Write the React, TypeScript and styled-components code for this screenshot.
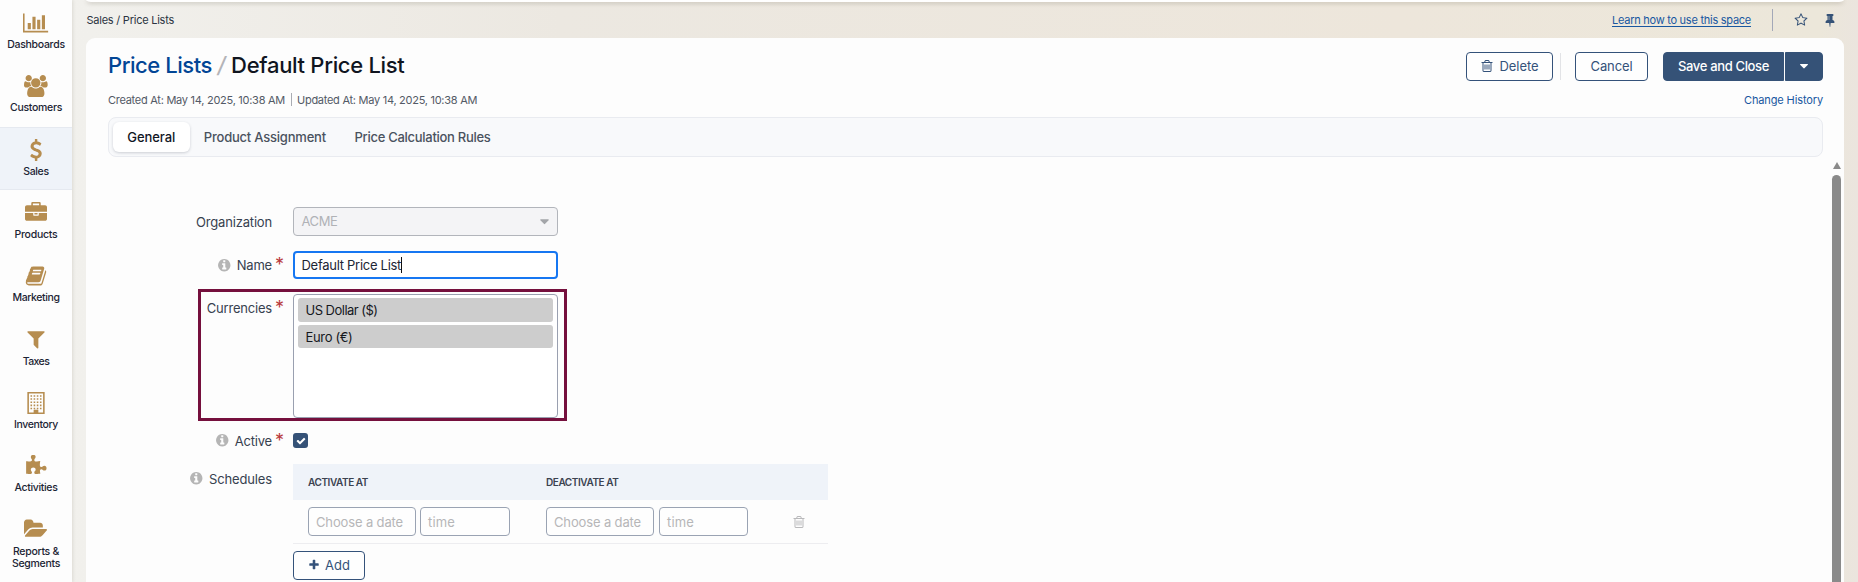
import React from 'react';
import styled, { createGlobalStyle, css } from 'styled-components';

const GlobalStyle = createGlobalStyle`
  *, *::before, *::after { box-sizing: border-box; }
  html, body { margin: 0; height: 100%; overflow: hidden; }
  body {
    font-family: Inter, "Liberation Sans", sans-serif;
    font-size: 13px;
    color: #2e3848;
    background: #f1f0ec;
  }
  a { color: #1857a0; text-decoration: none; }
`;

/* ---------- icons (1792 unit grid) ---------- */

const PATHS = {
  chart: 'M640 896v512h-256v-512h256zm384-512v1024h-256v-1024h256zm1024 1152v128h-2048v-1536h128v1408h1920zm-640-896v768h-256v-768h256zm384-384v1152h-256v-1152h256z',
  users: 'M593 896q-162 5-265 128h-134q-82 0-138-40.5t-56-118.5q0-353 124-353 6 0 43.5 21t97.5 42.5 119 21.5q67 0 133-23-5 37-5 66 0 159 93 256zm1071 637q0 120-73 189.5t-194 69.5h-874q-121 0-194-69.5t-73-189.5q0-53 3.5-103.5t14-109 26.5-108.5 43-97.5 62-81 85.5-53.5 111.5-20q10 0 43 21.5t73 48 107 48 135 21.5 135-21.5 107-48 73-48 43-21.5q61 0 111.5 20t85.5 53.5 62 81 43 97.5 26.5 108.5 14 109 3.5 103.5zm-1024-1277q0 106-75 181t-181 75-181-75-75-181 75-181 181-75 181 75 75 181zm704 384q0 159-112.5 271.5t-271.5 112.5-271.5-112.5-112.5-271.5 112.5-271.5 271.5-112.5 271.5 112.5 112.5 271.5zm576 225q0 78-56 118.5t-138 40.5h-134q-103-123-265-128 93-97 93-256 0-29-5-66 66 23 133 23 59 0 119-21.5t97.5-42.5 43.5-21q124 0 124 353zm-128-609q0 106-75 181t-181 75-181-75-75-181 75-181 181-75 181 75 75 181z',
  dollar: 'M1362 1185q0 153-99.5 263.5t-258.5 136.5v175q0 14-9 23t-23 9h-135q-13 0-22.5-9.5t-9.5-22.5v-175q-66-9-127.5-31t-101.5-44.5-74-48-46.5-37.5-17.5-18q-17-21-2-41l103-135q7-10 23-12 15-2 24 9l2 2q113 99 243 125 37 8 74 8 81 0 142.5-43t61.5-122q0-28-15-53t-33.5-42-58.5-37.5-66-32-80-32.5q-39-16-61.5-25t-61.5-26.5-62.5-31-56.5-35.5-53.5-42.5-43.5-49-35.5-58-21-66.5-8.5-78q0-138 98-242t255-134v-180q0-13 9.5-22.5t22.5-9.5h135q14 0 23 9t9 23v176q57 6 110.5 23t87 33.5 63.5 37.5 39 29 15 14q17 18 5 38l-81 146q-8 15-23 16-14 3-27-7-3-3-14.5-12t-39-26.5-58.5-32-74.5-26-85.5-11.5q-95 0-155 43t-60 111q0 26 8.5 48t29.5 41.5 39.5 33 56 31 60.5 27 70 27.5q53 20 81 31.5t76 35 75.5 42.5 62 50 53 63.5 31.5 76.5 13 94z',
  briefcase: 'M640 256h512v-128h-512v128zm1152 640v480q0 66-47 113t-113 47h-1472q-66 0-113-47t-47-113v-480h672v160q0 26 19 45t45 19h320q26 0 45-19t19-45v-160h672zm-768 0v128h-256v-128h256zm768-480v384h-1792v-384q0-66 47-113t113-47h352v-160q0-40 28-68t68-28h576q40 0 68 28t28 68v160h352q66 0 113 47t47 113z',
  book: 'M1703 478q40 57 18 129l-275 906q-19 64-76.5 107.5t-122.5 43.5h-923q-77 0-148.5-53.5t-99.5-131.5q-24-67-2-127 0-4 3-27t4-37q1-8-3-21.5t-3-19.5q2-11 8-21t16.5-23.5 16.5-23.5q23-38 45-91.5t30-91.5q3-10 .5-30t-.5-28q3-11 17-28t17-23q21-36 42-92t25-90q1-9-2.5-32t.5-28q4-13 22-30.5t22-22.5q19-26 42.5-84.5t27.5-96.5q1-8-3-25.5t-2-26.5q2-8 9-18t18-23 17-21q8-12 16.5-30.5t15-35 16-36 19.5-32 26.5-23.5 36-11.5 47.5 5.5l-1 3q38-9 51-9h761q74 0 114 56t18 130l-274 906q-36 119-71.5 153.5t-128.5 34.5h-869q-27 0-38 15-11 16-1 43 24 70 144 70h923q29 0 56-15.5t35-41.5l300-987q7-22 5-57 38 15 59 43zm-1064 2q-4 13 2 22.5t20 9.5h608q13 0 25.5-9.5t16.5-22.5l21-64q4-13-2-22.5t-20-9.5h-608q-13 0-25.5 9.5t-16.5 22.5zm-83 256q-4 13 2 22.5t20 9.5h608q13 0 25.5-9.5t16.5-22.5l21-64q4-13-2-22.5t-20-9.5h-608q-13 0-25.5 9.5t-16.5 22.5z',
  filter: 'M1595 295q17 41-14 70l-493 493v742q0 42-39 59-13 5-25 5-27 0-45-19l-256-256q-19-19-19-45v-486l-493-493q-31-29-14-70 17-39 59-39h1280q42 0 59 39z',
  puzzle: 'M1755 1082q0 81-44.5 135t-123.5 54q-41 0-77.5-17.5t-59-38-56.5-38-71-17.5q-110 0-110 124 0 39 16 115t15 115v5q-22 0-33 1-34 3-97.5 11.5t-115.5 13.5-98 5q-61 0-103-26.5t-42-83.5q0-37 17.5-71t38-56.5 38-59 17.5-77.5q0-79-54-123.5t-135-44.5q-84 0-143 45.5t-59 127.5q0 43 15 83t33.5 64.5 33.5 53 15 50.5q0 45-46 89-37 35-117 35-95 0-245-24-9-2-27.5-4t-27.5-4l-13-2q-1 0-3-1-2 0-2-1v-1024q2 1 17.5 3.5t34 5 21.5 3.5q150 24 245 24 80 0 117-35 46-44 46-89 0-22-15-50.5t-33.5-53-33.5-64.5-15-83q0-82 59-127.5t144-45.5q80 0 134 44.5t54 123.5q0 41-17.5 77.5t-38 59-38 56.5-17.5 71q0 57 42 83.5t103 26.5q64 0 180-15t163-17v2q-1 2-3.5 17.5t-5 34-3.5 21.5q-24 150-24 245 0 80 35 117 44 46 89 46 22 0 50.5-15t53-33.5 64.5-33.5 83-15q82 0 127.5 59t45.5 143z',
  folder: 'M1879 952q0 31-31 66l-336 396q-43 51-120.5 86.5t-143.5 35.5h-1088q-34 0-60.5-13t-26.5-43q0-31 31-66l336-396q43-51 120.5-86.5t143.5-35.5h1088q34 0 60.5 13t26.5 43zm-343-344v160h-832q-94 0-197 47.5t-164 119.5l-337 396-5 6q0-4-.5-12.5t-.5-12.5v-960q0-92 66-158t158-66h320q92 0 158 66t66 158v32h544q92 0 158 66t66 158z',
  trash: 'M704 736v576q0 14-9 23t-23 9h-64q-14 0-23-9t-9-23v-576q0-14 9-23t23-9h64q14 0 23 9t9 23zm256 0v576q0 14-9 23t-23 9h-64q-14 0-23-9t-9-23v-576q0-14 9-23t23-9h64q14 0 23 9t9 23zm256 0v576q0 14-9 23t-23 9h-64q-14 0-23-9t-9-23v-576q0-14 9-23t23-9h64q14 0 23 9t9 23zm128 724v-948h-896v948q0 22 7 40.5t14.5 27 10.5 8.5h832q3 0 10.5-8.5t14.5-27 7-40.5zm-672-1076h448l-48-117q-7-9-17-11h-317q-10 2-17 11zm928 32v64q0 14-9 23t-23 9h-96v948q0 83-47 143.5t-113 60.5h-832q-66 0-113-58.5t-47-141.5v-952h-96q-14 0-23-9t-9-23v-64q0-14 9-23t23-9h309l70-167q15-37 54-63t79-26h320q40 0 79 26t54 63l70 167h309q14 0 23 9t9 23z',
  pin: 'M800 864v-448q0-14-9-23t-23-9-23 9-9 23v448q0 14 9 23t23 9 23-9 9-23zm672 352q0 26-19 45t-45 19h-429l-51 483q-2 12-10.5 20.5t-20.5 8.5h-1q-27 0-32-27l-76-485h-404q-26 0-45-19t-19-45q0-123 78.5-221.5t177.5-98.5v-512q-52 0-90-38t-38-90 38-90 90-38h640q52 0 90 38t38 90-38 90-90 38v512q99 0 177.5 98.5t78.5 221.5z',
  star: 'M1201 1004l306-297-422-62-189-382-189 382-422 62 306 297-73 421 378-199 377 199zm527-357q0 22-26 48l-363 354 86 500q1 7 1 20 0 50-41 50-19 0-40-12l-449-236-449 236q-22 12-40 12-21 0-31.5-14.5t-10.5-35.5q0-6 2-20l86-500-364-354q-25-27-25-48 0-37 56-46l502-73 225-455q19-41 49-41t49 41l225 455 502 73q56 9 56 46z',
  info: 'M1152 1376v-160q0-14-9-23t-23-9h-96v-512q0-14-9-23t-23-9h-320q-14 0-23 9t-9 23v160q0 14 9 23t23 9h96v320h-96q-14 0-23 9t-9 23v160q0 14 9 23t23 9h448q14 0 23-9t9-23zm-128-896v-160q0-14-9-23t-23-9h-192q-14 0-23 9t-9 23v160q0 14 9 23t23 9h192q14 0 23-9t9-23zm640 416q0 209-103 385.5t-279.5 279.5-385.5 103-385.5-103-279.5-279.5-103-385.5 103-385.5 279.5-279.5 385.5-103 385.5 103 279.5 279.5 103 385.5z',
  plus: 'M1600 736v192q0 40-28 68t-68 28h-416v416q0 40-28 68t-68 28h-192q-40 0-68-28t-28-68v-416h-416q-40 0-68-28t-28-68v-192q0-40 28-68t68-28h416v-416q0-40 28-68t68-28h192q40 0 68 28t28 68v416h416q40 0 68 28t28 68z',
  check: 'M1671 566q0 40-28 68l-724 724-136 136q-28 28-68 28t-68-28l-136-136-362-362q-28-28-28-68t28-68l136-136q28-28 68-28t68 28l294 295 656-657q28-28 68-28t68 28l136 136q28 28 28 68z',
  caret: 'M1408 704q0 26-19 45l-448 448q-19 19-45 19t-45-19l-448-448q-19-19-19-45t19-45 45-19h896q26 0 45 19t19 45z',
};

const windows = [0, 1, 2, 3, 4].flatMap((r) => [0, 1, 2, 3].map((c) => `M${448 + c * 256} ${256 + r * 256}h128v128h-128z`));
const BUILDING =
  'M192 0h1408v1792h-1408zM320 128v1536h384v-192q0-32 32-32h320q32 0 32 32v192h384v-1536z' + windows.join('');

type IconName = keyof typeof PATHS | 'building';
const WIDE: Partial<Record<IconName, number>> = { chart: 2048, users: 1920, folder: 1920 };

const Glyph = styled.svg`
  display: block;
  flex: none;
  fill: currentColor;
`;

function Icon({ name, size }: { name: IconName; size: number }) {
  const w = WIDE[name] ?? 1792;
  return (
    <Glyph width={(size * w) / 1792} height={size} viewBox={`0 0 ${w} 1792`} aria-hidden>
      <path fillRule={name === 'building' ? 'evenodd' : 'nonzero'} d={name === 'building' ? BUILDING : PATHS[name]} />
    </Glyph>
  );
}

/* ---------- page frame ---------- */

const Page = styled.div`
  display: flex;
  height: 100vh;
  overflow: hidden;
  background: linear-gradient(90deg, #f2f1ed 0, #f1f0ec 90px, #ece8e1 560px, #ede6db 1400px, #ece7da 1820px, #ebe5de 100%);
`;

const Sidebar = styled.nav`
  position: relative;
  z-index: 1;
  flex: none;
  width: 72px;
  background: #fdfdfd;
  box-shadow: 0 0 4px rgba(90, 80, 60, 0.22);
`;

const NavItem = styled.a<{ $active?: boolean }>`
  display: flex;
  flex-direction: column;
  align-items: center;
  height: 63.3px;
  padding-top: 12px;
  color: #b68d50;
  ${(p) => p.$active && css`
    background: #eff3f9;
    box-shadow: inset 0 1px #e5e9f0, inset 0 -1px #e5e9f0;
  `}
`;

const NavLabel = styled.span<{ $ls: number }>`
  margin-top: 5.2px;
  font-size: 10.5px;
  font-weight: 500;
  line-height: 12px;
  letter-spacing: ${(p) => p.$ls}px;
  color: #1c2434;
  text-align: center;
  white-space: pre;
`;

const Main = styled.main`
  flex: 1;
  min-width: 0;
  display: flex;
  flex-direction: column;
  padding: 0 14px;
`;

const HeaderEdge = styled.div`
  flex: none;
  height: 2px;
  background: #fff;
  border-radius: 0 0 8px 8px / 0 0 2px 2px;
  box-shadow: 0 1px 4px rgba(70, 60, 40, 0.35);
`;

const TopBar = styled.div`
  flex: none;
  display: flex;
  align-items: center;
  height: 36px;
  font-size: 11px;
  color: #2b3442;
  padding: 0 7px 0 0.5px;
`;

const Spaced = styled.span<{ $ls: number }>`
  letter-spacing: ${(p) => p.$ls}px;
  white-space: nowrap;
`;

const HelpLink = styled.a`
  margin-left: auto;
  letter-spacing: -0.26px;
  text-decoration: underline;
  text-underline-offset: 2px;
`;

const BarDivider = styled.i`
  width: 1px;
  height: 22px;
  margin: 0 21px 0 21px;
  background: #a3a8b8;
`;

const BarIcons = styled.div`
  display: flex;
  gap: 15px;
  color: #355277;
`;

const Card = styled.section`
  flex: 1;
  display: flex;
  flex-direction: column;
  min-height: 0;
  padding: 14px 0 0 22px;
  border-radius: 9px 9px 0 0;
  background: #fdfdfd;
`;

/* ---------- card head ---------- */

const TitleRow = styled.div`
  display: flex;
  align-items: center;
  height: 29px;
  padding-right: 21px;
`;

const Title = styled.h1`
  display: flex;
  gap: 5.5px;
  margin: -4px auto 0 0;
  font-size: 22px;
  font-weight: 500;
  line-height: 28px;
  color: #10151f;
  a { color: #024595; letter-spacing: -0.45px; }
  i { color: #b4b4b8; }
  span { letter-spacing: -0.31px; }
`;

const Button = styled.button<{ $w: number; $ls?: number }>`
  display: flex;
  align-items: center;
  justify-content: center;
  gap: 5px;
  width: ${(p) => p.$w}px;
  height: 29px;
  padding: 0 0 1px;
  border: 1px solid #34527a;
  border-radius: 4px;
  background: #fefefe;
  color: #34527a;
  font: 400 13px Inter, sans-serif;
  letter-spacing: ${(p) => p.$ls ?? 0}px;
`;

const ButtonDivider = styled.i`
  width: 1px;
  height: 27px;
  margin: 0 14px 0 7px;
  background: #e2e3e6;
`;

const SplitButton = styled.div`
  display: flex;
  gap: 1px;
  margin-left: 15px;
  button {
    background: #355277;
    color: #fff;
    border-color: #355277;
  }
  button:first-child { border-radius: 4px 0 0 4px; font-weight: 500; }
  button:last-child { border-radius: 0 4px 4px 0; }
`;

const MetaRow = styled.div`
  display: flex;
  align-items: center;
  height: 13px;
  margin: 12px 21px 11px 0;
  font-size: 11px;
  color: #535a66;
  a { margin-left: auto; letter-spacing: -0.12px; }
`;

const MetaDivider = styled.i`
  width: 1px;
  height: 13px;
  margin: 0 5px 0 6px;
  background: #a9acb3;
`;

const Tabs = styled.div`
  flex: none;
  display: flex;
  height: 40px;
  margin-right: 21px;
  padding: 4px;
  border: 1px solid #e9ebf0;
  border-radius: 8px;
  background: #f8f9fb;
`;

const Tab = styled.a<{ $active?: boolean; $ls: number }>`
  display: flex;
  align-items: center;
  height: 30px;
  padding: 0 14.3px 1px;
  border-radius: 6px;
  font-weight: 500;
  letter-spacing: ${(p) => p.$ls}px;
  color: ${(p) => (p.$active ? '#11161f' : '#4a525e')};
  ${(p) => p.$active && css`
    background: #fff;
    box-shadow: 0 1px 3px rgba(30, 40, 60, 0.2);
  `}
`;

/* ---------- form ---------- */

const ScrollArea = styled.div`
  flex: 1;
  display: flex;
  justify-content: space-between;
  min-height: 0;
  overflow: hidden;
`;

const Form = styled.div`
  width: 720px;
  padding-top: 50px;
`;

const Field = styled.div<{ $gap: number }>`
  position: relative;
  display: flex;
  align-items: flex-start;
  margin-bottom: ${(p) => p.$gap}px;
`;

const Label = styled.label<{ $ls: number; $h?: number }>`
  flex: none;
  display: flex;
  align-items: center;
  justify-content: flex-end;
  gap: 5.5px;
  width: 164px;
  height: ${(p) => p.$h ?? 29}px;
  color: #37414f;
  letter-spacing: ${(p) => p.$ls}px;
  svg { color: #b5b5b5; }
`;

const Required = styled.span<{ $top?: number }>`
  flex: none;
  width: 21px;
  height: 15px;
  padding: ${(p) => p.$top ?? 0}px 0 0 3px;
  font: 400 18px/15px Inter, sans-serif;
  color: #b93a3c;
`;

const Organization = styled.div`
  display: flex;
  justify-content: space-between;
  width: 265px;
  height: 29px;
  padding: 5px 5.5px 0 7.5px;
  border: 1px solid #b2b5bb;
  border-radius: 4px;
  background: #f4f4f6;
  color: #b0b2b6;
  letter-spacing: -0.4px;
  svg { margin-top: 1px; color: #a3a5a9; }
`;

const NameInput = styled.div`
  display: flex;
  align-items: center;
  width: 265px;
  height: 28px;
  padding-left: 6.5px;
  border: 2px solid #1677f2;
  border-radius: 4px;
  background: #fff;
  color: #1c2534;
  letter-spacing: -0.28px;
  &::after {
    content: '';
    width: 1px;
    height: 16px;
    background: #111;
  }
`;

const Listbox = styled.div`
  display: flex;
  flex-direction: column;
  gap: 3px;
  width: 265px;
  height: 124px;
  padding: 3px 4px;
  border: 1px solid #9aa0b0;
  border-radius: 4px;
  background: #fff;
`;

const Option = styled.div<{ $ls: number }>`
  height: 23.5px;
  padding-left: 7.5px;
  border-radius: 3px;
  background: #cdcdcd;
  color: #15181e;
  line-height: 24px;
  letter-spacing: ${(p) => p.$ls}px;
`;

const Highlight = styled.div`
  position: absolute;
  left: 90px;
  top: -5px;
  width: 369px;
  height: 132px;
  border: 3px solid #75103d;
`;

const Checkbox = styled.span`
  display: grid;
  place-items: center;
  width: 15px;
  height: 15px;
  border-radius: 3px;
  background: #355277;
  color: #fff;
`;

const Schedule = styled.div`
  width: 535px;
`;

const ScheduleHead = styled.div`
  display: grid;
  grid-template-columns: 238px 1fr;
  align-items: center;
  height: 36px;
  padding: 0 0 1px 15px;
  background: #eff3f9;
  font-size: 10px;
  font-weight: 600;
  letter-spacing: -0.43px;
  color: #3b4250;
`;

const ScheduleRow = styled.div`
  display: flex;
  align-items: center;
  height: 44px;
  padding: 0 22px 0 15px;
  border-bottom: 1px solid #ededf0;
  color: #b9b9bb;
  svg { margin-left: auto; }
`;

const Picker = styled.div<{ $w: number; $mr: number; $ls: number }>`
  width: ${(p) => p.$w}px;
  height: 29px;
  margin-right: ${(p) => p.$mr}px;
  padding-left: 7px;
  border: 1px solid #9aa3b3;
  border-radius: 4px;
  background: #fefefe;
  color: #b6b6b8;
  line-height: 29px;
  letter-spacing: ${(p) => p.$ls}px;
`;

const AddButton = styled(Button)`
  margin-top: 7px;
`;

const Scrollbar = styled.div`
  display: flex;
  flex-direction: column;
  align-items: center;
  width: 15px;
  padding-top: 5px;
  &::before {
    content: '';
    border: 4.5px solid transparent;
    border-top: 0;
    border-bottom: 7px solid #8a8a8a;
  }
  &::after {
    content: '';
    flex: 1;
    width: 9px;
    margin-top: 6px;
    border-radius: 5px 5px 0 0;
    background: #8a8a8a;
  }
`;

const NAV: { icon: IconName; label: string; ls: number }[] = [
  { icon: 'chart', label: 'Dashboards', ls: -0.29 },
  { icon: 'users', label: 'Customers', ls: -0.3 },
  { icon: 'dollar', label: 'Sales', ls: -0.35 },
  { icon: 'briefcase', label: 'Products', ls: -0.25 },
  { icon: 'book', label: 'Marketing', ls: -0.4 },
  { icon: 'filter', label: 'Taxes', ls: -0.6 },
  { icon: 'building', label: 'Inventory', ls: -0.38 },
  { icon: 'puzzle', label: 'Activities', ls: -0.34 },
  { icon: 'folder', label: 'Reports &\nSegments', ls: -0.3 },
];

export default function App() {
  return (
    <Page>
      <GlobalStyle />
      <Sidebar>
        {NAV.map((n) => (
          <NavItem key={n.label} $active={n.label === 'Sales'}>
            <Icon name={n.icon} size={22} />
            <NavLabel $ls={n.ls}>{n.label}</NavLabel>
          </NavItem>
        ))}
      </Sidebar>
      <Main>
        <HeaderEdge />
        <TopBar>
          <Spaced $ls={-0.24}>Sales / Price Lists</Spaced>
          <HelpLink href="#">Learn how to use this space</HelpLink>
          <BarDivider />
          <BarIcons>
            <Icon name="star" size={14} />
            <Icon name="pin" size={14} />
          </BarIcons>
        </TopBar>
        <Card>
          <TitleRow>
            <Title>
              <a href="#">Price Lists</a>
              <i>/</i>
              <span>Default Price List</span>
            </Title>
            <Button $w={87} $ls={-0.06}><Icon name="trash" size={14} />Delete</Button>
            <ButtonDivider />
            <Button $w={73} $ls={-0.1}>Cancel</Button>
            <SplitButton>
              <Button $w={121} $ls={-0.35}>Save and Close</Button>
              <Button $w={38}><Icon name="caret" size={14} /></Button>
            </SplitButton>
          </TitleRow>
          <MetaRow>
            <Spaced $ls={-0.27}>Created At: May 14, 2025, 10:38 AM</Spaced>
            <MetaDivider />
            <Spaced $ls={-0.27}>Updated At: May 14, 2025, 10:38 AM</Spaced>
            <a href="#">Change History</a>
          </MetaRow>
          <Tabs>
            <Tab $active $ls={-0.07}>General</Tab>
            <Tab $ls={-0.22}>Product Assignment</Tab>
            <Tab $ls={-0.28}>Price Calculation Rules</Tab>
          </Tabs>
          <ScrollArea>
            <Form>
              <Field $gap={15}>
                <Label $ls={-0.17}>Organization</Label>
                <Required />
                <Organization>ACME<Icon name="caret" size={15} /></Organization>
              </Field>
              <Field $gap={15}>
                <Label $ls={-0.2} $h={28}><Icon name="info" size={14.5} />Name</Label>
                <Required $top={6}>*</Required>
                <NameInput>Default Price List</NameInput>
              </Field>
              <Field $gap={15}>
                <Label $ls={-0.2} $h={27}>Currencies</Label>
                <Required $top={6}>*</Required>
                <Listbox>
                  <Option $ls={-0.52}>US Dollar ($)</Option>
                  <Option $ls={-0.35}>Euro (€)</Option>
                </Listbox>
                <Highlight />
              </Field>
              <Field $gap={16}>
                <Label $ls={-0.2} $h={15}><Icon name="info" size={14.5} />Active</Label>
                <Required>*</Required>
                <Checkbox><Icon name="check" size={10} /></Checkbox>
              </Field>
              <Field $gap={0}>
                <Label $ls={-0.14}><Icon name="info" size={14.5} />Schedules</Label>
                <Required />
                <Schedule>
                  <ScheduleHead>
                    <span>ACTIVATE AT</span>
                    <span>DEACTIVATE AT</span>
                  </ScheduleHead>
                  <ScheduleRow>
                    <Picker $w={108} $mr={4} $ls={-0.14}>Choose a date</Picker>
                    <Picker $w={90} $mr={36} $ls={0.15}>time</Picker>
                    <Picker $w={108} $mr={5} $ls={-0.14}>Choose a date</Picker>
                    <Picker $w={89} $mr={0} $ls={0.15}>time</Picker>
                    <Icon name="trash" size={14} />
                  </ScheduleRow>
                  <AddButton $w={72}><Icon name="plus" size={12} />Add</AddButton>
                </Schedule>
              </Field>
            </Form>
            <Scrollbar />
          </ScrollArea>
        </Card>
      </Main>
    </Page>
  );
}
